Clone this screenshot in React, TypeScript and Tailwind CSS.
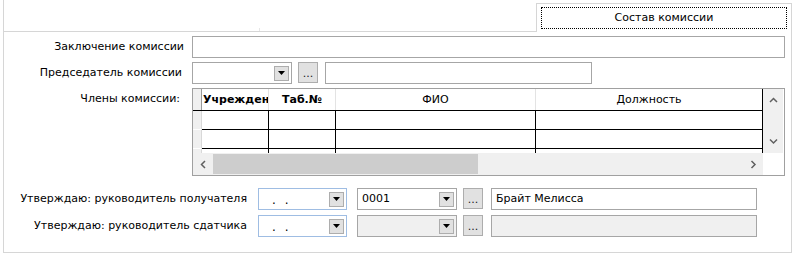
import React from "react";

const font = { fontFamily: '"DejaVu Sans", Verdana, sans-serif' };

function DropButton() {
  return (
    <div className="flex h-[15px] w-[15px] items-center justify-center border border-[#adadad] bg-[#e1e1e1]">
      <svg width="7" height="4" viewBox="0 0 7 4">
        <path d="M0 0H7L3.5 4Z" fill="#000" />
      </svg>
    </div>
  );
}

function DotsButton() {
  return (
    <div className="flex h-[21px] w-[20px] items-end justify-center border border-[#adadad] bg-[#e1e1e1] pb-[3px] text-[11px] leading-none text-[#1a1a1a]">
      ...
    </div>
  );
}

function Chevron({ dir }: { dir: "up" | "down" | "left" | "right" }) {
  const d = {
    up: "M1 5L4.5 1.5L8 5",
    down: "M1 1.5L4.5 5L8 1.5",
    left: "M5 1L1.5 4.5L5 8",
    right: "M1.5 1L5 4.5L1.5 8",
  }[dir];
  const vertical = dir === "up" || dir === "down";
  return (
    <svg width={vertical ? 9 : 7} height={vertical ? 7 : 9} viewBox={vertical ? "0 0 9 7" : "0 0 7 9"}>
      <path d={d} fill="none" stroke="#606060" strokeWidth="1.5" />
    </svg>
  );
}

function MembersGrid() {
  const cols = ["w-[67px]", "w-[67px]", "w-[200px]", "w-[227px]"];
  return (
    <div className="flex h-[88px] w-[593px] border border-[#a0a0a0] bg-white">
      <div className="flex w-[570px] flex-col">
        {/* table */}
        <div className="h-[64px] overflow-hidden">
          <div className="flex h-[22px] border-b border-black">
            <div className="w-[9px] shrink-0 border-r border-[#9a9a9a] bg-[#f0f0f0]" />
            <div className="w-[67px] shrink-0 overflow-hidden whitespace-nowrap border-r border-[#e3e3e3] pl-[1px] pt-[4px] text-[11px] font-bold leading-[14px]">
              Учреждение
            </div>
            <div className="w-[67px] shrink-0 border-r border-[#e3e3e3] pt-[4px] text-center text-[11px] font-bold leading-[14px]">
              Таб.№
            </div>
            <div className="w-[200px] shrink-0 border-r border-[#e3e3e3] pt-[4px] text-center text-[11px] leading-[14px]">
              ФИО
            </div>
            <div className="w-[227px] shrink-0 border-r border-black pt-[4px] text-center text-[11px] leading-[14px]">
              Должность
            </div>
          </div>
          {[0, 1, 2].map((r) => (
            <div key={r} className="flex h-[19px] border-b border-black">
              <div className="-mb-px w-[9px] shrink-0 border-b border-r border-b-[#ffffff] border-r-[#d8d8d8] bg-[#f0f0f0]" />
              {cols.map((c, i) => (
                <div key={i} className={`${c} shrink-0 border-r border-black`} />
              ))}
            </div>
          ))}
        </div>
        {/* horizontal scrollbar */}
        <div className="flex h-[22px] bg-[#f0f0f0]">
          <div className="flex w-[20px] items-center justify-center">
            <Chevron dir="left" />
          </div>
          <div className="my-[1px] w-[265px] bg-[#cdcdcd]" />
          <div className="flex-1" />
          <div className="flex w-[20px] items-center justify-center">
            <Chevron dir="right" />
          </div>
        </div>
      </div>
      {/* vertical scrollbar */}
      <div className="flex w-[20px] flex-col">
        <div className="flex h-[64px] flex-col items-center justify-between bg-[#f0f0f0] py-[8px]">
          <Chevron dir="up" />
          <Chevron dir="down" />
        </div>
        <div className="flex-1 bg-white" />
      </div>
    </div>
  );
}

function DateCombo() {
  return (
    <div className="flex h-[22px] w-[89px] items-center justify-between border border-[#9fbde3] bg-white pr-[2px]">
      <div className="flex items-end self-stretch pb-[3px] text-[12px] leading-none">
        <span className="ml-[13px]">.</span>
        <span className="ml-[9px]">.</span>
      </div>
      <DropButton />
    </div>
  );
}

export default function App() {
  return (
    <div className="h-[260px] w-[797px] overflow-hidden bg-white text-[11px] text-black" style={font}>
      {/* tab strip */}
      <div className="ml-[3px] flex h-[32px] w-[789px]">
        <div className="flex w-[533px] items-end border-b border-l border-[#d6d6d6]">
          <div className="ml-[255px] h-[3px] w-px bg-[#e6e6e6]" />
        </div>
        <div className="mt-[3px] flex w-[256px] border border-b-0 border-[#d6d6d6] bg-white px-[4px] pb-[3px] pt-[3px]">
          <div className="flex flex-1 items-center justify-center border border-dotted border-black">
            Состав комиссии
          </div>
        </div>
      </div>

      {/* panel */}
      <div className="ml-[3px] h-[221px] w-[789px] border-x border-b border-[#d6d6d6] pt-[4px]">
        <div className="flex h-[22px] items-center">
          <div className="w-[188px] pr-[8px] text-right">Заключение комиссии</div>
          <div className="h-[22px] w-[593px] border border-[#a6a6a6] bg-white" />
        </div>

        <div className="mt-[4px] flex h-[22px] items-center">
          <div className="w-[188px] pr-[10px] text-right">Председатель комиссии</div>
          <div className="flex h-[22px] w-[100px] items-center justify-end border border-[#a6a6a6] bg-white pr-[2px]">
            <DropButton />
          </div>
          <div className="ml-[6px] self-start">
            <DotsButton />
          </div>
          <div className="ml-[7px] h-[22px] w-[267px] border border-[#a6a6a6] bg-white" />
        </div>

        <div className="mt-[4px] flex">
          <div className="w-[188px] pr-[12px] pt-[3px] text-right">Члены комиссии:</div>
          <MembersGrid />
        </div>

        <div className="mt-[12px] flex h-[22px] items-center">
          <div className="w-[254px] pr-[11px] text-right">Утверждаю: руководитель получателя</div>
          <DateCombo />
          <div className="ml-[10px] flex h-[22px] w-[100px] items-center justify-between border border-[#a6a6a6] bg-white pl-[4px] pr-[2px]">
            <span>0001</span>
            <DropButton />
          </div>
          <div className="ml-[6px] self-start">
            <DotsButton />
          </div>
          <div className="ml-[8px] flex h-[22px] w-[266px] items-center border border-[#a6a6a6] bg-white pl-[4px]">
            Брайт Мелисса
          </div>
        </div>

        <div className="mt-[5px] flex h-[22px] items-center">
          <div className="w-[254px] pr-[11px] text-right">Утверждаю: руководитель сдатчика</div>
          <DateCombo />
          <div className="ml-[10px] flex h-[22px] w-[100px] items-center justify-end border border-[#a6a6a6] bg-[#f0f0f0] pr-[2px]">
            <DropButton />
          </div>
          <div className="ml-[6px] self-start">
            <DotsButton />
          </div>
          <div className="ml-[8px] h-[22px] w-[266px] border border-[#a6a6a6] bg-[#f0f0f0]" />
        </div>
      </div>
    </div>
  );
}
